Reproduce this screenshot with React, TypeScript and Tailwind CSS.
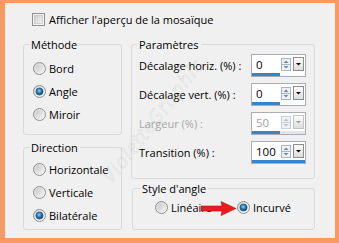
import React from "react";

const Radio = ({ checked }: { checked?: boolean }) => (
  <svg width="13" height="13" viewBox="0 0 13 13" className="shrink-0">
    <defs>
      <linearGradient id="rOuter" x1="0" y1="0" x2="1" y2="1">
        <stop offset="0" stopColor="#d4d4d4" />
        <stop offset="1" stopColor="#fbfbfb" />
      </linearGradient>
      <linearGradient id="rInner" x1="0" y1="0" x2="1" y2="1">
        <stop offset="0" stopColor="#c9c9c9" />
        <stop offset="1" stopColor="#f2f2f2" />
      </linearGradient>
      <radialGradient id="rDot" cx="0.45" cy="0.4" r="0.6">
        <stop offset="0" stopColor="#8fd3f5" />
        <stop offset="0.5" stopColor="#2c7fb8" />
        <stop offset="1" stopColor="#0d3f66" />
      </radialGradient>
    </defs>
    <circle cx="6.5" cy="6.5" r="6" fill="url(#rOuter)" stroke="#8e8f8f" strokeWidth="1" />
    {checked ? (
      <circle cx="6.5" cy="6.5" r="3.6" fill="url(#rDot)" stroke="#1a4f7a" strokeWidth="0.6" />
    ) : (
      <circle cx="6.5" cy="6.5" r="4" fill="url(#rInner)" />
    )}
  </svg>
);

const Checkbox = () => (
  <svg width="13" height="13" viewBox="0 0 13 13" className="shrink-0">
    <defs>
      <linearGradient id="cbIn" x1="0" y1="0" x2="1" y2="1">
        <stop offset="0" stopColor="#cbcbcb" />
        <stop offset="1" stopColor="#f6f6f6" />
      </linearGradient>
    </defs>
    <rect x="0.5" y="0.5" width="12" height="12" fill="#f4f4f4" stroke="#8e8f8f" />
    <rect x="2.5" y="2.5" width="8" height="8" fill="url(#cbIn)" stroke="#b9b9b9" strokeWidth="0.6" />
  </svg>
);

const RadioItem = ({ label, checked, className = "" }: { label: string; checked?: boolean; className?: string }) => (
  <div className={`flex h-[17px] items-center gap-[3px] ${className}`}>
    <Radio checked={checked} />
    <span>{label}</span>
  </div>
);

const SpinBox = ({ value, bar, disabled }: { value: string; bar: number; disabled?: boolean }) => (
  <div className="flex h-[23px] w-[55px] flex-col border border-[#abadb3] bg-white">
    <div className="flex flex-1 items-center">
      <span className={`w-[29px] pl-[4px] text-[11.5px] ${disabled ? "text-[#a0a0a0]" : "text-black"}`}>{value}</span>
      <svg width="10" height="13" viewBox="0 0 10 13" className="shrink-0">
        <rect x="0.5" y="0.5" width="9" height="12" fill="#eef2f6" stroke={disabled ? "#c9d0d6" : "#a7b6c4"} />
        <line x1="1" y1="6.5" x2="9" y2="6.5" stroke={disabled ? "#c9d0d6" : "#a7b6c4"} />
        <path d="M2.5 5 L5 2.5 L7.5 5 Z" fill={disabled ? "#b7c0c8" : "#6f89a3"} />
        <path d="M2.5 8 L5 10.5 L7.5 8 Z" fill={disabled ? "#b7c0c8" : "#6f89a3"} />
      </svg>
      <svg width="11" height="14" viewBox="0 0 11 14" className="ml-[2px] shrink-0">
        <defs>
          <linearGradient id="ddBtn" x1="0" y1="0" x2="0" y2="1">
            <stop offset="0" stopColor="#fdfdfd" />
            <stop offset="1" stopColor="#dcdcdc" />
          </linearGradient>
        </defs>
        <rect x="0.5" y="0.5" width="10" height="13" fill="url(#ddBtn)" stroke={disabled ? "#c4c4c4" : "#8d8d8d"} />
        <path d="M3 6 L8 6 L5.5 8.5 Z" fill={disabled ? "#9a9a9a" : "#000"} />
      </svg>
    </div>
    <div className="flex h-[3px] w-full">
      <div className="h-full bg-[#3d82c4]" style={{ width: `${bar}%` }} />
      {disabled && <div className="h-full flex-1 bg-[#dfe6ee]" />}
    </div>
  </div>
);

const ParamRow = ({ label, value, bar, disabled }: { label: string; value: string; bar: number; disabled?: boolean }) => (
  <div className="flex h-[23px] items-center justify-between">
    <span className={disabled ? "text-[#a6a6a6]" : "text-black"}>{label}</span>
    <SpinBox value={value} bar={bar} disabled={disabled} />
  </div>
);

const legend = "ml-[5px] px-[2px] leading-[15px]";
const box = "rounded-[3px] border border-[#d9d9d9]";

export default function App() {
  return (
    <div className="h-[243px] w-[339px] bg-[#f99a66] pb-[5px] pl-[5px] pr-[4px] pt-[3px]">
      <div
        className="relative h-full bg-[#f0f0f0] text-[11px] leading-[15px] text-black"
        style={{ fontFamily: '"Open Sans", "Noto Sans", sans-serif' }}
      >
        <div className="flex items-center gap-[4px] pl-[27px] pt-[9px]">
          <Checkbox />
          <span>Afficher l'aperçu de la mosaïque</span>
        </div>

        <div className="mt-[10px] flex pl-[18px]">
          <div className="flex w-[99px] flex-col">
            <fieldset className={`${box} h-[98px]`}>
              <legend className={legend}>Méthode</legend>
              <div className="flex flex-col gap-[6px] pl-[9px] pt-[8px]">
                <RadioItem label="Bord" />
                <RadioItem label="Angle" checked />
                <RadioItem label="Miroir" />
              </div>
            </fieldset>
            <fieldset className={`${box} mt-[5px] h-[90px]`}>
              <legend className={legend}>Direction</legend>
              <div className="flex flex-col gap-[6px] pl-[9px] pt-[6px]">
                <RadioItem label="Horizontale" />
                <RadioItem label="Verticale" />
                <RadioItem label="Bilatérale" checked />
              </div>
            </fieldset>
          </div>

          <div className="ml-[9px] flex w-[184px] flex-col">
            <fieldset className={`${box} h-[142px]`}>
              <legend className={legend}>Paramètres</legend>
              <div className="flex flex-col gap-[6px] pl-[7px] pr-[8px] pt-[2px]">
                <ParamRow label="Décalage horiz. (%) :" value="0" bar={52} />
                <ParamRow label="Décalage vert. (%) :" value="0" bar={52} />
                <ParamRow label="Largeur (%) :" value="50" bar={52} disabled />
                <ParamRow label="Transition (%) :" value="100" bar={100} />
              </div>
            </fieldset>
            <fieldset className={`${box} ml-[1px] mt-[2px] h-[49px]`}>
              <legend className={`${legend} ml-[7px]`}>Style d'angle</legend>
              <div className="flex pl-[22px] pt-[3px]">
                <RadioItem label="Linéaire" className="w-[82px]" />
                <RadioItem label="Incurvé" checked />
              </div>
            </fieldset>
          </div>
        </div>

        <svg width="36" height="15" viewBox="0 0 36 15" className="absolute left-[196px] top-[198px]">
          <path d="M0 5 L21 5 L20 0.5 L35 7.5 L20 14.5 L21 10 L0 10 Z" fill="#e81d1d" stroke="#b81212" strokeWidth="0.6" />
        </svg>

        <div
          className="pointer-events-none absolute left-[72px] top-[110px] -rotate-[52deg] select-none text-[20px] italic tracking-[1px] text-transparent"
          style={{ WebkitTextStroke: "0.5px rgba(130,130,130,0.22)" }}
        >
          VioletteGraphic
        </div>
      </div>
    </div>
  );
}
